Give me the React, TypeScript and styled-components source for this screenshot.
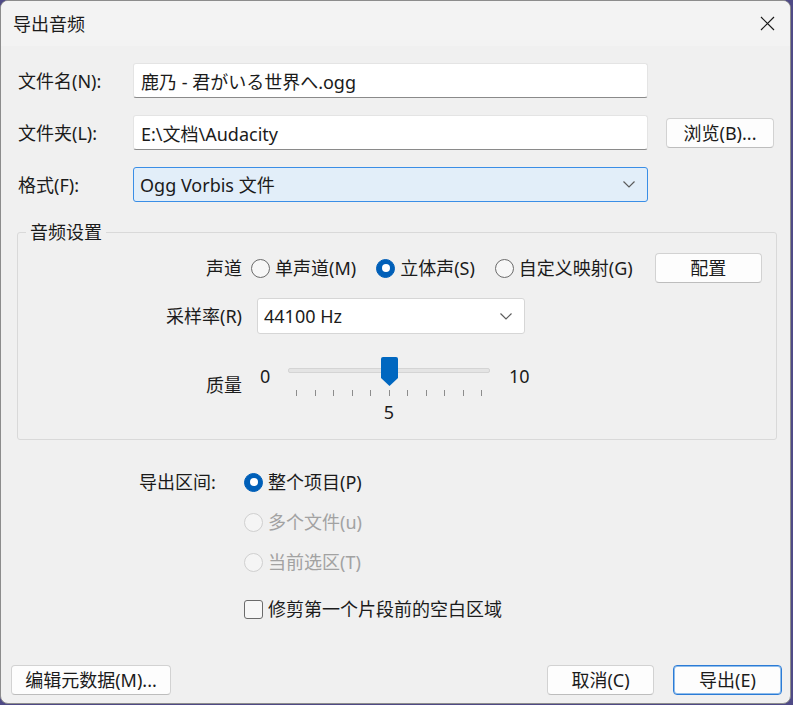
import styled, { createGlobalStyle } from 'styled-components';

const GlobalStyle = createGlobalStyle`
  html, body {
    margin: 0;
    padding: 0;
  }
  body {
    background: #4f4a86;
    font-family: "Noto Sans", "Noto Sans CJK SC", sans-serif;
    font-size: 18px;
    color: #1b1b1b;
  }
  * {
    box-sizing: border-box;
  }
`;

const Window = styled.div`
  width: 791px;
  height: 704px;
  border: 1px solid #8c8c8c;
  border-radius: 8px;
  overflow: hidden;
  background: #f0f0f0;
  display: flex;
  flex-direction: column;
`;

const TitleBar = styled.div`
  height: 45px;
  flex: none;
  background: #f3f3f3;
  display: flex;
  align-items: center;
  justify-content: space-between;
  padding-left: 12px;
`;

const Title = styled.span`
  line-height: 24px;
`;

const CloseButton = styled.div`
  width: 46px;
  height: 45px;
  display: flex;
  align-items: center;
  justify-content: center;
`;

const Body = styled.div`
  flex: 1;
  display: flex;
  flex-direction: column;
  padding: 17px 0 8px 0;
`;

const FileGrid = styled.div`
  display: grid;
  grid-template-columns: 98px 515px 108px;
  grid-auto-rows: 35px;
  column-gap: 18px;
  row-gap: 17px;
  align-items: center;
  padding-left: 16px;
`;

const FieldLabel = styled.label`
  padding-left: 1px;
  line-height: 24px;
  white-space: nowrap;
`;

const TextBox = styled.input`
  height: 35px;
  width: 100%;
  font: inherit;
  color: inherit;
  padding: 0 7px;
  background: #ffffff;
  border: 1px solid #e4e4e4;
  border-bottom: 1px solid #8a8a8a;
  border-radius: 3px;
  outline: none;
`;

const Select = styled.div<{ $width?: number; $focused?: boolean }>`
  height: ${p => (p.$focused ? 35 : 36)}px;
  width: ${p => (p.$width ? `${p.$width}px` : '100%')};
  display: flex;
  align-items: center;
  justify-content: space-between;
  padding: 0 12px 0 6px;
  background: ${p => (p.$focused ? '#e2eef9' : '#ffffff')};
  border: 1px solid ${p => (p.$focused ? '#3a8ee6' : '#d6d6d6')};
  border-radius: 3px;
  white-space: nowrap;
  line-height: 24px;
`;

const PushButton = styled.button<{ $width: number; $default?: boolean }>`
  width: ${p => p.$width}px;
  height: 30px;
  padding: 0;
  font: inherit;
  color: #1b1b1b;
  line-height: 24px;
  background: #fdfdfd;
  border: 1px solid ${p => (p.$default ? '#2b7bd6' : '#d2d2d2')};
  border-bottom-color: ${p => (p.$default ? '#2b7bd6' : '#bdbdbd')};
  border-radius: 4px;
  box-shadow: ${p => (p.$default ? 'inset 0 0 0 1px #8fbdeb' : 'none')};
  white-space: nowrap;
`;

const GroupBox = styled.fieldset`
  margin: 18px 0 0 16px;
  width: 760px;
  padding: 9px 0 17px 0;
  border: 1px solid #d9d9d9;
  border-radius: 3px;
  min-width: 0;
`;

const GroupTitle = styled.legend`
  margin-left: 8px;
  padding: 0 4px;
  line-height: 24px;
`;

const OptionsGrid = styled.div`
  display: grid;
  grid-template-columns: 224px auto;
  column-gap: 9px;
  row-gap: 15px;
  align-items: center;
  justify-items: start;
`;

const OptionLabel = styled.span<{ $top?: number }>`
  justify-self: end;
  align-self: ${p => (p.$top !== undefined ? 'start' : 'center')};
  padding-top: ${p => p.$top ?? 0}px;
  line-height: 24px;
  white-space: nowrap;
`;

const RadioRow = styled.div`
  display: flex;
  align-items: center;
  height: 30px;
  gap: 20px;
`;

const Choice = styled.label<{ $disabled?: boolean }>`
  display: flex;
  align-items: center;
  gap: 5px;
  height: 30px;
  line-height: 24px;
  white-space: nowrap;
  color: ${p => (p.$disabled ? '#a2a2a2' : '#1b1b1b')};
`;

const RadioDot = styled.span<{ $checked?: boolean; $disabled?: boolean }>`
  width: 19px;
  height: 19px;
  flex: none;
  border-radius: 50%;
  display: flex;
  align-items: center;
  justify-content: center;
  background: ${p => (p.$checked ? '#005fb8' : p.$disabled ? '#f5f5f5' : '#f7f7f7')};
  border: 1px solid
    ${p => (p.$checked ? '#005fb8' : p.$disabled ? '#cfcfcf' : '#6b6b6b')};

  &::after {
    content: '';
    display: ${p => (p.$checked ? 'block' : 'none')};
    width: 8px;
    height: 8px;
    border-radius: 50%;
    background: #ffffff;
  }
`;

const CheckSquare = styled.span`
  width: 19px;
  height: 19px;
  flex: none;
  border: 1px solid #6b6b6b;
  border-radius: 3px;
  background: #f7f7f7;
`;

const ConfigButton = styled(PushButton)`
  margin-left: 2px;
`;

const RateSelect = styled(Select)`
  margin-left: 6px;
`;

/* quality slider */
const Slider = styled.div`
  display: flex;
  align-items: flex-start;
  margin-top: 8px;
`;

const SliderEnd = styled.span<{ $width: number; $indent: number }>`
  width: ${p => p.$width}px;
  padding-left: ${p => p.$indent}px;
  margin-top: 9px;
  line-height: 20px;
`;

const SliderBody = styled.div`
  width: 202px;
  display: flex;
  flex-direction: column;
`;

const ThumbLane = styled.div`
  position: relative;
  height: 30px;
  padding-top: 11px;
`;

const Track = styled.div`
  height: 5px;
  background: #e4e4e4;
  border: 1px solid #d4d4d4;
  border-radius: 2px;
`;

const Thumb = styled.svg<{ $pos: number }>`
  position: absolute;
  top: 0;
  left: calc(8px + ${p => p.$pos} * 186px - 8.5px);
`;

const Ticks = styled.div`
  display: flex;
  justify-content: space-between;
  padding: 0 8px;
  margin-top: 3px;
  height: 6px;
`;

const Tick = styled.span`
  width: 1px;
  height: 6px;
  background: #8c8c8c;
`;

const SliderValue = styled.span<{ $pos: number }>`
  align-self: flex-start;
  margin-left: calc(8px + ${p => p.$pos} * 186px);
  transform: translateX(-50%);
  margin-top: 6px;
  line-height: 20px;
`;

const RangeGrid = styled.div`
  display: grid;
  grid-template-columns: 105px auto;
  grid-auto-rows: 30px;
  row-gap: 10px;
  align-items: center;
  margin-top: 27px;
  padding-left: 138px;
`;

const RangeLabel = styled.span`
  line-height: 24px;
  white-space: nowrap;
`;

const TrimRow = styled(Choice)`
  grid-column: 2;
  margin-top: 14px;
`;

const Footer = styled.div`
  margin-top: auto;
  display: flex;
  align-items: center;
  padding: 0 8px 0 10px;
  gap: 19px;
`;

const Spacer = styled.div`
  flex: 1;
`;

const Chevron = () => (
  <svg width="12" height="7" viewBox="0 0 12 7">
    <polyline points="0.5,0.5 6,6 11.5,0.5" fill="none" stroke="#5c5c5c" strokeWidth="1.2" />
  </svg>
);

const App = () => {
  const quality = 5;
  const pos = quality / 10;

  return (
    <>
      <GlobalStyle />
      <Window>
        <TitleBar>
          <Title>导出音频</Title>
          <CloseButton>
            <svg width="15" height="15" viewBox="0 0 15 15">
              <path d="M1 1 L14 14 M14 1 L1 14" stroke="#1b1b1b" strokeWidth="1.2" />
            </svg>
          </CloseButton>
        </TitleBar>

        <Body>
          <FileGrid>
            <FieldLabel>文件名(N):</FieldLabel>
            <TextBox readOnly value="鹿乃 - 君がいる世界へ.ogg" />
            <span />

            <FieldLabel>文件夹(L):</FieldLabel>
            <TextBox readOnly value="E:\文档\Audacity" />
            <PushButton $width={108}>浏览(B)...</PushButton>

            <FieldLabel>格式(F):</FieldLabel>
            <Select $focused>
              Ogg Vorbis 文件
              <Chevron />
            </Select>
          </FileGrid>

          <GroupBox>
            <GroupTitle>音频设置</GroupTitle>
            <OptionsGrid>
              <OptionLabel>声道</OptionLabel>
              <RadioRow>
                <Choice>
                  <RadioDot />
                  单声道(M)
                </Choice>
                <Choice>
                  <RadioDot $checked />
                  立体声(S)
                </Choice>
                <Choice>
                  <RadioDot />
                  自定义映射(G)
                </Choice>
                <ConfigButton $width={107}>配置</ConfigButton>
              </RadioRow>

              <OptionLabel>采样率(R)</OptionLabel>
              <RateSelect $width={268}>
                44100 Hz
                <Chevron />
              </RateSelect>

              <OptionLabel $top={24}>质量</OptionLabel>
              <Slider>
                <SliderEnd $width={37} $indent={9}>0</SliderEnd>
                <SliderBody>
                  <ThumbLane>
                    <Track />
                    <Thumb $pos={pos} width="17" height="29" viewBox="0 0 17 29">
                      <path d="M2 0 H15 Q17 0 17 2 V21 L8.5 29 L0 21 V2 Q0 0 2 0 Z" fill="#0067c0" />
                    </Thumb>
                  </ThumbLane>
                  <Ticks>
                    {Array.from({ length: 11 }, (_, i) => (
                      <Tick key={i} />
                    ))}
                  </Ticks>
                  <SliderValue $pos={pos}>{quality}</SliderValue>
                </SliderBody>
                <SliderEnd $width={40} $indent={19}>10</SliderEnd>
              </Slider>
            </OptionsGrid>
          </GroupBox>

          <RangeGrid>
            <RangeLabel>导出区间:</RangeLabel>
            <Choice>
              <RadioDot $checked />
              整个项目(P)
            </Choice>
            <Choice $disabled style={{ gridColumn: 2 }}>
              <RadioDot $disabled />
              多个文件(u)
            </Choice>
            <Choice $disabled style={{ gridColumn: 2 }}>
              <RadioDot $disabled />
              当前选区(T)
            </Choice>
            <TrimRow>
              <CheckSquare />
              修剪第一个片段前的空白区域
            </TrimRow>
          </RangeGrid>

          <Footer>
            <PushButton $width={160}>编辑元数据(M)...</PushButton>
            <Spacer />
            <PushButton $width={107}>取消(C)</PushButton>
            <PushButton $width={109} $default>
              导出(E)
            </PushButton>
          </Footer>
        </Body>
      </Window>
    </>
  );
};

export default App;
